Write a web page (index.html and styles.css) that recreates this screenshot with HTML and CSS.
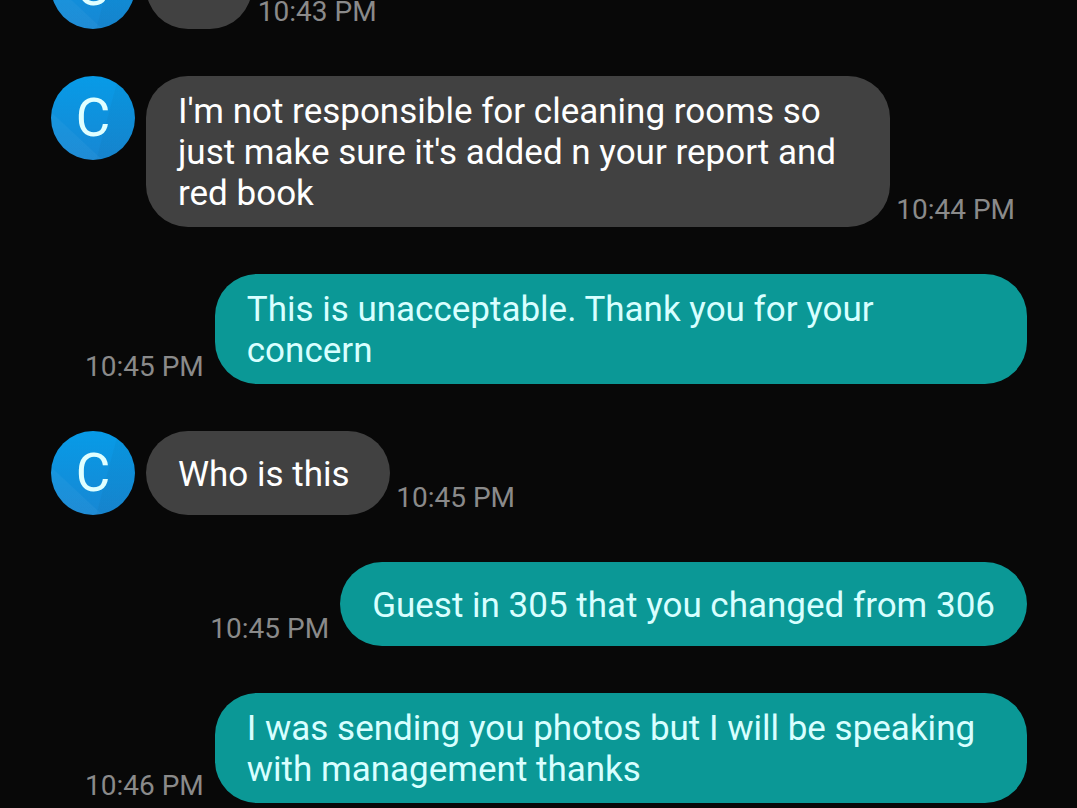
FILE: index.html
```html
<!DOCTYPE html>
<html lang="en">
<head>
    <meta charset="UTF-8">
    <meta name="viewport" content="width=device-width, initial-scale=1.0">
    <title>Messages</title>
    <link rel="stylesheet" href="styles.css">
</head>
<body>
    <main class="thread">
        <div class="message received">
            <span class="avatar">C</span>
            <p class="bubble">Ok</p>
            <time class="time">10:43 PM</time>
        </div>
        <div class="message received">
            <span class="avatar">C</span>
            <p class="bubble">I'm not responsible for cleaning rooms so just make sure it's added n your report and red book</p>
            <time class="time">10:44 PM</time>
        </div>
        <div class="message sent">
            <time class="time">10:45 PM</time>
            <p class="bubble">This is unacceptable. Thank you for your concern</p>
        </div>
        <div class="message received">
            <span class="avatar">C</span>
            <p class="bubble">Who is this&nbsp;</p>
            <time class="time">10:45 PM</time>
        </div>
        <div class="message sent">
            <time class="time">10:45 PM</time>
            <p class="bubble">Guest in 305 that you changed from 306</p>
        </div>
        <div class="message sent">
            <time class="time">10:46 PM</time>
            <p class="bubble">I was sending you photos but I will be speaking with management thanks</p>
        </div>
    </main>
</body>
</html>
```
FILE: styles.css
```css
* {
    box-sizing: border-box;
}

body {
    margin: 0;
    background-color: #080808;
    font-family: Roboto, sans-serif;
    color: #ffffff;
}

/* newest message stays at the bottom, older ones go off the top */
.thread {
    display: flex;
    flex-direction: column;
    justify-content: flex-end;
    gap: 47px;
    height: 100vh;
    padding: 0 50px 5px 51px;
    overflow: hidden;
}

.message {
    display: flex;
    flex-shrink: 0;
    align-items: flex-end;
}

.received {
    gap: 6px;
    padding-right: 12px;
}

.sent {
    justify-content: flex-end;
    gap: 11px;
    padding-left: 34px;
}

.avatar {
    display: flex;
    flex-shrink: 0;
    align-items: center;
    justify-content: center;
    align-self: flex-start;
    width: 84px;
    height: 84px;
    margin-right: 5px;
    border-radius: 50%;
    background:
        linear-gradient(43deg, rgba(255, 255, 255, 0.04) 29%, transparent 30%),
        linear-gradient(285deg, rgba(0, 0, 0, 0.03) 36%, transparent 37%),
        linear-gradient(#079be7, #1787d3);
    color: #e0ffff;
    font-size: 53px;
}

.bubble {
    display: flex;
    align-items: center;
    min-height: 84px;
    margin: 0;
    padding: 15px 32px 13px;
    border-radius: 42px;
    font-size: 35px;
    line-height: 41px;
}

.received .bubble {
    background-color: #414141;
}

.sent .bubble {
    background-color: #0b9896;
    color: #d8ffff;
}

.time {
    flex-shrink: 0;
    color: #8a8a8a;
    font-size: 28px;
    line-height: 34px;
    white-space: nowrap;
}
```
